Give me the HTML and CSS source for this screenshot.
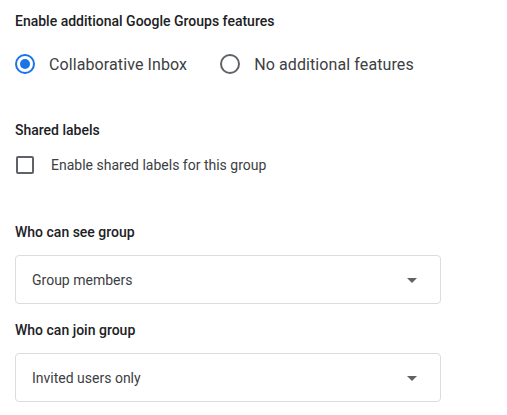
FILE: index.html
```html
<!DOCTYPE html>
<html lang="en">

<head>
    <meta charset="UTF-8">
    <meta name="viewport" content="width=device-width, initial-scale=1.0">
    <title>Group settings</title>
    <link rel="stylesheet" href="styles.css">
</head>

<body>
    <div class="settings">
        <div class="section features">
            <h2 class="label">Enable additional Google Groups features</h2>
            <div class="radio-row">
                <label class="radio">
                    <span class="radio-dot checked"></span>
                    <span>Collaborative Inbox</span>
                </label>
                <label class="radio">
                    <span class="radio-dot"></span>
                    <span>No additional features</span>
                </label>
            </div>
        </div>

        <div class="section shared">
            <h2 class="label">Shared labels</h2>
            <label class="check">
                <span class="check-box"></span>
                <span>Enable shared labels for this group</span>
            </label>
        </div>

        <div class="section see">
            <h2 class="label">Who can see group</h2>
            <div class="select">
                <span>Group members</span>
                <span class="arrow"></span>
            </div>
        </div>

        <div class="section join">
            <h2 class="label">Who can join group</h2>
            <div class="select">
                <span>Invited users only</span>
                <span class="arrow"></span>
            </div>
        </div>
    </div>
</body>

</html>
```

FILE: styles.css
```css
* {
    margin: 0;
    padding: 0;
    box-sizing: border-box;
}

body {
    font-family: Roboto, "Liberation Sans", sans-serif;
    background: #fff;
    color: #3c4043;
}

.settings {
    padding: 11px 15px 0 15px;
    width: 456px;
}

.label {
    font-size: 14px;
    font-weight: 500;
    line-height: 20px;
    color: #202124;
}

/* spacing between groups */
.shared {
    margin-top: 36px;
}

.see {
    margin-top: 37px;
}

.join {
    margin-top: 16px;
}

.radio-row {
    display: flex;
    gap: 33px;
    margin-top: 13px;
    height: 40px;
    align-items: center;
}

.radio {
    display: flex;
    align-items: center;
    gap: 14px;
    font-size: 16px;
    letter-spacing: 0.1px;
}

.radio-dot {
    width: 20px;
    height: 20px;
    border: 2px solid #5f6368;
    border-radius: 50%;
    position: relative;
}

.radio-dot.checked {
    border-color: #1a73e8;
}

.radio-dot.checked::after {
    content: "";
    position: absolute;
    width: 10px;
    height: 10px;
    left: 3px;
    top: 3px;
    border-radius: 50%;
    background: #1a73e8;
}

.check {
    display: flex;
    align-items: center;
    gap: 17px;
    height: 40px;
    margin-top: 5px;
    font-size: 14px;
    padding-left: 1px;
}

.check-box {
    width: 18px;
    height: 18px;
    border: 2px solid #5f6368;
    border-radius: 2px;
}

.select {
    display: flex;
    align-items: center;
    justify-content: space-between;
    height: 49px;
    margin-top: 13px;
    padding: 0 23px 0 16px;
    border: 1px solid #dadce0;
    border-radius: 4px;
    font-size: 14px;
    color: #3c4043;
}

.arrow {
    width: 0;
    height: 0;
    border-left: 5px solid transparent;
    border-right: 5px solid transparent;
    border-top: 5px solid #5f6368;
    margin-top: 2px;
}
```
